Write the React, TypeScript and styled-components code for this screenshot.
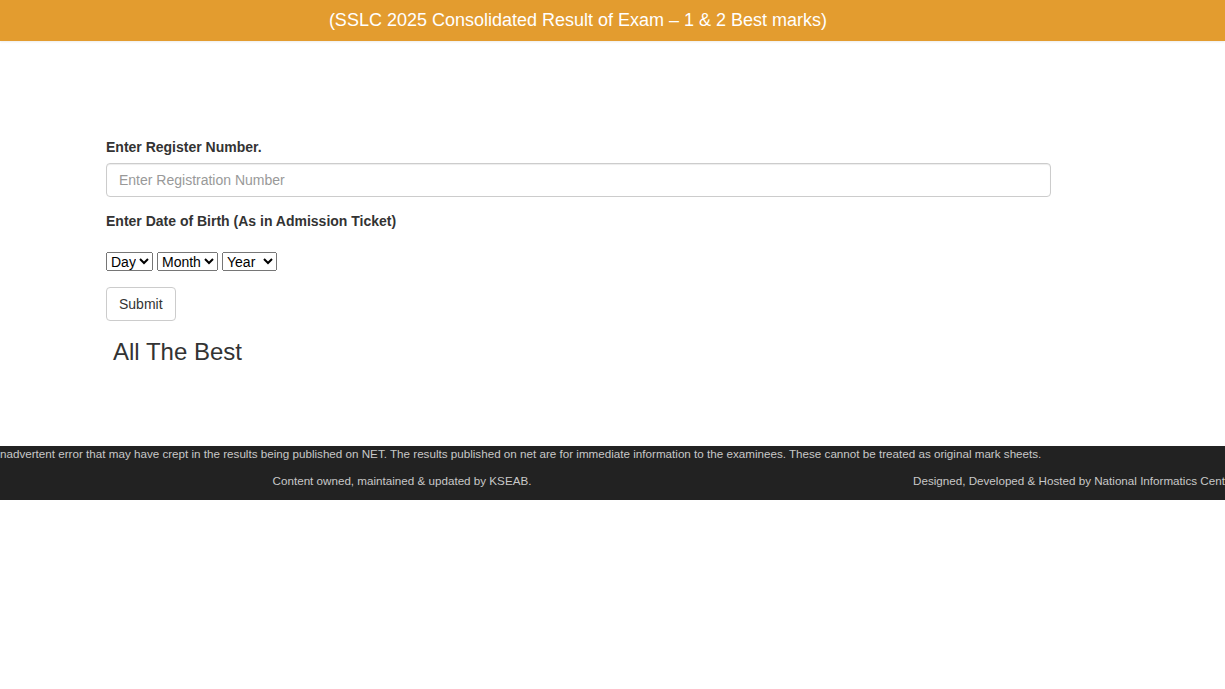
import React from 'react'
import styled, { createGlobalStyle } from 'styled-components'

const GlobalStyle = createGlobalStyle`
  html, body {
    margin: 0;
    padding: 0;
    background: #fff;
    font-family: "Liberation Sans", Arial, sans-serif;
    color: #333;
  }
`

const App = () => {
  return (
    <Page>
      <GlobalStyle />
      <Header>
        <HeaderTitle>(SSLC 2025 Consolidated Result of Exam – 1 &amp; 2 Best marks)</HeaderTitle>
      </Header>

      <Main>
        <Form onSubmit={(e) => e.preventDefault()}>
          <Label>Enter Register Number.</Label>
          <TextInput type="text" placeholder="Enter Registration Number" />

          <Label>Enter Date of Birth (As in Admission Ticket)</Label>
          <SelectRow>
            <Select defaultValue="">
              <option value="">Day</option>
            </Select>
            <Select defaultValue="">
              <option value="">Month</option>
            </Select>
            <Select defaultValue="">
              <option value="">Year&nbsp;</option>
            </Select>
          </SelectRow>

          <SubmitButton type="submit">Submit</SubmitButton>
        </Form>
        <Wish>All The Best</Wish>
      </Main>

      <Footer>
        <Marquee>
          <MarqueeText>
            nadvertent error that may have crept in the results being published on NET. The results published on net are for immediate information to the examinees. These cannot be treated as original mark sheets.
          </MarqueeText>
        </Marquee>
        <FooterRow>
          <FooterCell>Content owned, maintained &amp; updated by KSEAB.</FooterCell>
          <FooterCell $right>Designed, Developed &amp; Hosted by National Informatics Centre</FooterCell>
        </FooterRow>
      </Footer>
    </Page>
  )
}

export default App

const Page = styled.div`
  width: 1225px;
  overflow: hidden;
`
const Header = styled.header`
  height: 41px;
  background-color: #e39c2f;
  display: flex;
  align-items: center;
  box-shadow: 0 1px 2px rgba(0, 0, 0, 0.08);
`
const HeaderTitle = styled.h1`
  margin: 0;
  width: 1156px;
  text-align: center;
  font-size: 18px;
  font-weight: normal;
  color: #fff;
`
const Main = styled.main`
  padding: 96px 0 0 106px;
  height: 309px;
`
const Form = styled.form`
  width: 945px;
  display: flex;
  flex-direction: column;
  align-items: flex-start;
`
const Label = styled.label`
  font-size: 14px;
  font-weight: bold;
  color: #333;
  line-height: 20px;
  margin-bottom: 6px;
`
const TextInput = styled.input`
  box-sizing: border-box;
  width: 100%;
  height: 34px;
  padding: 6px 12px;
  margin-bottom: 14px;
  font-family: "Liberation Sans", Arial, sans-serif;
  font-size: 14px;
  color: #555;
  border: 1px solid #ccc;
  border-radius: 4px;
  box-shadow: inset 0 1px 1px rgba(0, 0, 0, 0.075);
  &::placeholder {
    color: #999;
  }
`
const SelectRow = styled.div`
  display: flex;
  gap: 4px;
  margin-top: 15px;
  margin-bottom: 16px;
`
const Select = styled.select`
  height: 19px;
  font-family: "Liberation Sans", Arial, sans-serif;
  font-size: 14px;
  color: #000;
  padding: 0;
`
const SubmitButton = styled.button`
  box-sizing: border-box;
  height: 34px;
  padding: 6px 12px;
  font-family: "Liberation Sans", Arial, sans-serif;
  font-size: 14px;
  color: #333;
  background: #fff;
  border: 1px solid #ccc;
  border-radius: 4px;
`
const Wish = styled.h3`
  margin: 17px 0 0 7px;
  font-size: 24px;
  font-weight: 500;
  color: #333;
`
const Footer = styled.footer`
  background-color: #222;
  height: 54px;
  color: #c8c8c8;
  font-size: 11.65px;
`
const Marquee = styled.div`
  height: 17px;
  overflow: hidden;
  white-space: nowrap;
  padding-top: 1px;
`
const MarqueeText = styled.span`
  display: inline-block;
`
const FooterRow = styled.div`
  display: grid;
  grid-template-columns: 804px 1fr;
  padding-top: 10px;
  white-space: nowrap;
`
const FooterCell = styled.div<{ $right?: boolean }>`
  text-align: ${(p) => (p.$right ? 'left' : 'center')};
  padding-left: ${(p) => (p.$right ? '109px' : '0')};
  overflow: hidden;
`
